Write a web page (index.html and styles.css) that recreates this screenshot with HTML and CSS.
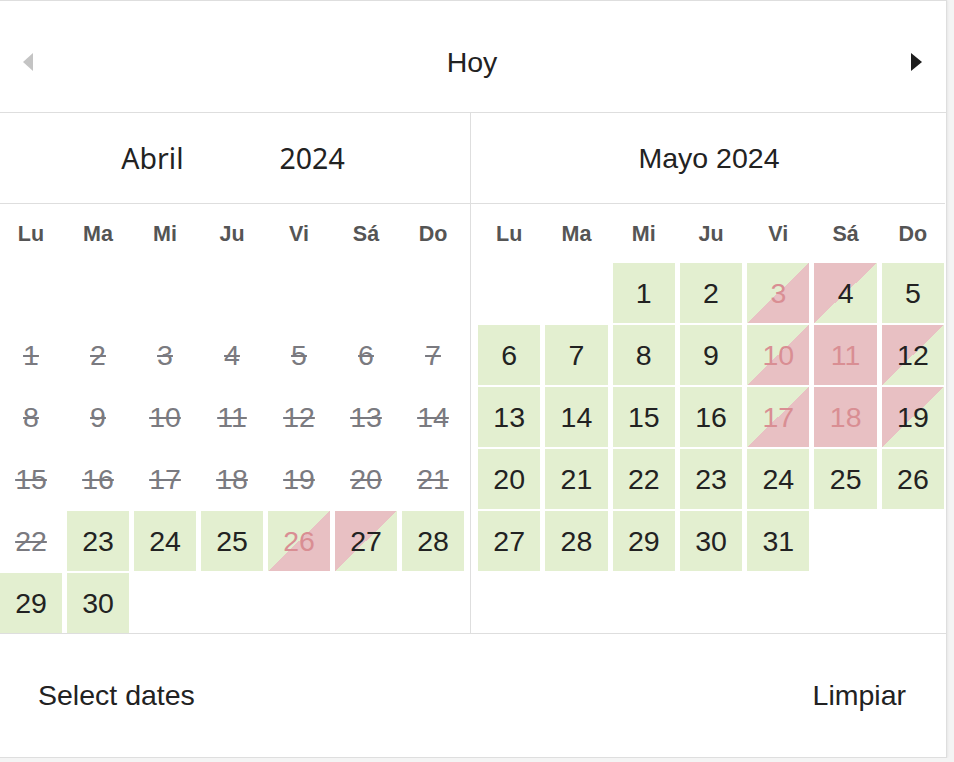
FILE: index.html
```html
<!DOCTYPE html>
<html lang="es">
<head>
<meta charset="utf-8">
<link rel="stylesheet" href="styles.css">
</head>
<body>
<div class="picker">
  <div class="topbar">
    <span class="arrow arrow-left"></span>
    <span class="today">Hoy</span>
    <span class="arrow arrow-right"></span>
  </div>
  <div class="months">
    <div class="month month-left">
      <div class="title"><span class="sel">Abril</span><span class="sel">2024</span></div>
      <div class="weekdays"><span>Lu</span><span>Ma</span><span>Mi</span><span>Ju</span><span>Vi</span><span>Sá</span><span>Do</span></div>
      <div class="days">
        <span class="e"></span><span class="e"></span><span class="e"></span><span class="e"></span><span class="e"></span><span class="e"></span><span class="e"></span>
        <span class="p">1</span><span class="p">2</span><span class="p">3</span><span class="p">4</span><span class="p">5</span><span class="p">6</span><span class="p">7</span>
        <span class="p">8</span><span class="p">9</span><span class="p">10</span><span class="p">11</span><span class="p">12</span><span class="p">13</span><span class="p">14</span>
        <span class="p">15</span><span class="p">16</span><span class="p">17</span><span class="p">18</span><span class="p">19</span><span class="p">20</span><span class="p">21</span>
        <span class="p">22</span><span class="av">23</span><span class="av">24</span><span class="av">25</span><span class="in">26</span><span class="out">27</span><span class="av">28</span>
        <span class="av">29</span><span class="av">30</span><span class="e"></span><span class="e"></span><span class="e"></span><span class="e"></span><span class="e"></span>
      </div>
    </div>
    <div class="month month-right">
      <div class="title"><span class="plain">Mayo 2024</span></div>
      <div class="weekdays"><span>Lu</span><span>Ma</span><span>Mi</span><span>Ju</span><span>Vi</span><span>Sá</span><span>Do</span></div>
      <div class="days">
        <span class="e"></span><span class="e"></span><span class="av">1</span><span class="av">2</span><span class="in">3</span><span class="out">4</span><span class="av">5</span>
        <span class="av">6</span><span class="av">7</span><span class="av">8</span><span class="av">9</span><span class="in">10</span><span class="full">11</span><span class="out">12</span>
        <span class="av">13</span><span class="av">14</span><span class="av">15</span><span class="av">16</span><span class="in">17</span><span class="full">18</span><span class="out">19</span>
        <span class="av">20</span><span class="av">21</span><span class="av">22</span><span class="av">23</span><span class="av">24</span><span class="av">25</span><span class="av">26</span>
        <span class="av">27</span><span class="av">28</span><span class="av">29</span><span class="av">30</span><span class="av">31</span><span class="e"></span><span class="e"></span>
        <span class="e"></span><span class="e"></span><span class="e"></span><span class="e"></span><span class="e"></span><span class="e"></span><span class="e"></span>
      </div>
    </div>
  </div>
  <div class="footer">
    <span class="select">Select dates</span>
    <span class="clear">Limpiar</span>
  </div>
</div>
</body>
</html>
```
FILE: styles.css
```css
* { box-sizing: border-box; }
html, body { margin: 0; padding: 0; background: #f4f4f4; }
body { font-family: "Liberation Sans", Arial, sans-serif; color: #222; overflow: hidden; }

.picker {
  width: 954px;
  margin-left: -7px;
  background: #fff;
  border: 1px solid #dedede;
  box-shadow: 0 0 3px rgba(0,0,0,0.10);
}

.topbar {
  height: 112px;
  border-bottom: 1px solid #dedede;
  display: flex;
  align-items: center;
  justify-content: space-between;
  padding: 11px 24px 0 29px;
  font-size: 28.5px;
}
.today { padding-left: 0; }
.arrow { width: 0; height: 0; border-top: 9px solid transparent; border-bottom: 9px solid transparent; }
.arrow-left { border-right: 10px solid #c4c4c4; }
.arrow-right { border-left: 11px solid #1c1c1c; }

.months { display: flex; }
.month { display: flex; flex-direction: column; }
.month-left { width: 477px; border-right: 1px solid #dedede; }
.month-right { width: 474px; }

.title {
  height: 91px;
  border-bottom: 1px solid #dedede;
  display: flex;
  align-items: center;
  justify-content: center;
  font-size: 28.5px;
}
.month-left .title { gap: 96px; padding-left: 2px; }
.sel { font-family: "Noto Sans", "Open Sans", sans-serif; font-size: 28.5px; color: #222; }
.plain { padding-left: 2px; }

.weekdays {
  height: 59px;
  display: grid;
  grid-template-columns: repeat(7, 62px);
  column-gap: 5px;
  align-items: center;
  padding-left: 6px;
  font-weight: bold;
  font-size: 21.5px;
  color: #555;
}
.weekdays span { text-align: center; padding-top: 2px; }

.days {
  display: grid;
  grid-template-columns: repeat(7, 62px);
  grid-template-rows: repeat(6, 60px);
  column-gap: 5px;
  row-gap: 2px;
  padding-left: 6px;
  font-size: 28.5px;
}
.month-right .days, .month-right .weekdays { grid-template-columns: repeat(7, 62.3px); padding-left: 7px; }
.days span { display: flex; align-items: center; justify-content: center; }

.p { color: #7a7a80; text-decoration: line-through; text-decoration-thickness: 2px; }
.av { background: #e3efd0; }
.in { background: linear-gradient(to bottom right, #e3efd0 50%, #e8c0c3 50%); color: #d98e93; }
.out { background: linear-gradient(to bottom right, #e8c0c3 50%, #e3efd0 50%); }
.full { background: #e8c0c3; color: #d98e93; }

.footer {
  height: 124px;
  border-top: 1px solid #dedede;
  display: flex;
  align-items: center;
  justify-content: space-between;
  padding: 0 40px 0 44px;
  font-size: 28.5px;
}
```
